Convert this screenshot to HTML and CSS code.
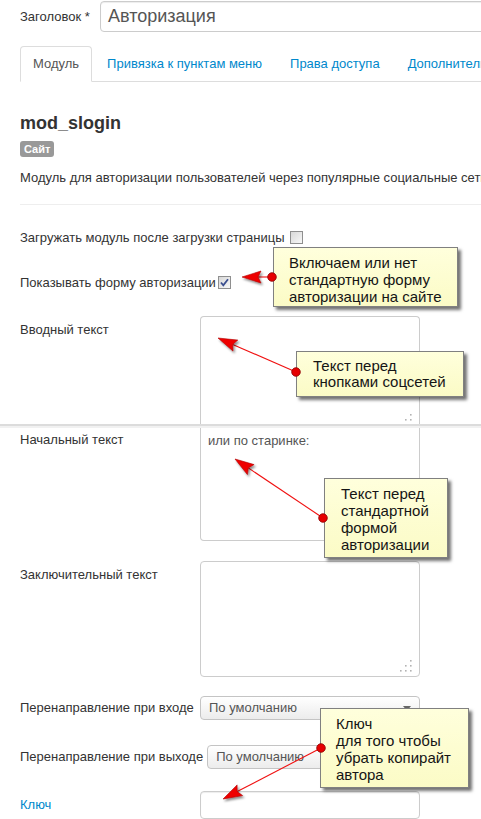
FILE: index.html
```html
<!DOCTYPE html>
<html>
<head>
  <meta charset="utf-8">
  <title>Модуль: Авторизация</title>
  <link rel="stylesheet" href="styles.css">
</head>
<body>
  <div class="page">
    <div class="title-row">
      <label class="title-label">Заголовок *</label>
      <div class="title-input">Авторизация</div>
    </div>

    <div class="tabs">
      <a class="tab active">Модуль</a>
      <a class="tab">Привязка к пунктам меню</a>
      <a class="tab">Права доступа</a>
      <a class="tab">Дополнительные параметры</a>
    </div>

    <div class="module-head">
      <h3 class="module-name">mod_slogin</h3>
      <span class="badge">Сайт</span>
      <p class="module-desc">Модуль для авторизации пользователей через популярные социальные сети.</p>
    </div>
    <div class="divider"></div>

    <div class="check-row first">
      <span>Загружать модуль после загрузки страницы</span>
      <span class="checkbox"></span>
    </div>
    <div class="check-row second">
      <span>Показывать форму авторизации</span>
      <span class="checkbox checked">
        <svg width="11" height="11" viewBox="0 0 11 11"><path d="M2 5.5 L4.3 8.3 L9 2.2" fill="none" stroke="#3b4f8f" stroke-width="1.8"/></svg>
      </span>
    </div>

    <div class="field-row intro-row">
      <label class="field-label">Вводный текст</label>
      <div class="textarea cut-bottom">
        <svg class="grip" width="12" height="12" viewBox="0 0 12 12"><g fill="#b3b3b3"><rect x="10" y="0" width="1.6" height="1.6"/><rect x="5" y="5" width="1.6" height="1.6"/><rect x="10" y="5" width="1.6" height="1.6"/><rect x="0" y="10" width="1.6" height="1.6"/><rect x="5" y="10" width="1.6" height="1.6"/><rect x="10" y="10" width="1.6" height="1.6"/></g></svg>
      </div>
    </div>

    <div class="seam"></div>

    <div class="field-row start-row">
      <label class="field-label">Начальный текст</label>
      <div class="textarea cut-top">или по старинке:</div>
    </div>

    <div class="field-row end-row">
      <label class="field-label">Заключительный текст</label>
      <div class="textarea full">
        <svg class="grip" width="12" height="12" viewBox="0 0 12 12"><g fill="#b3b3b3"><rect x="10" y="0" width="1.6" height="1.6"/><rect x="5" y="5" width="1.6" height="1.6"/><rect x="10" y="5" width="1.6" height="1.6"/><rect x="0" y="10" width="1.6" height="1.6"/><rect x="5" y="10" width="1.6" height="1.6"/><rect x="10" y="10" width="1.6" height="1.6"/></g></svg>
      </div>
    </div>

    <div class="inline-row login-row">
      <label class="inline-label">Перенаправление при входе</label>
      <div class="select">По умолчанию<span class="caret"></span></div>
    </div>
    <div class="inline-row logout-row">
      <label class="inline-label">Перенаправление при выходе</label>
      <div class="select">По умолчанию<span class="caret"></span></div>
    </div>
    <div class="inline-row key-row">
      <label class="inline-label key-label">Ключ</label>
      <div class="text-input"></div>
    </div>

    <!-- callouts -->
    <div class="callout c1">Включаем или нет<br>стандартную форму<br>авторизации на сайте</div>
    <div class="callout c2">Текст перед<br>кнопками соцсетей</div>
    <div class="callout c3">Текст перед<br>стандартной<br>формой<br>авторизации</div>
    <div class="callout c4">Ключ<br>для того чтобы<br>убрать копирайт<br>автора</div>

    <svg class="arrows" width="481" height="819" viewBox="0 0 481 819">
      <defs>
        <filter id="shade" x="-50%" y="-50%" width="200%" height="200%">
          <feDropShadow dx="1.5" dy="2" stdDeviation="1" flood-color="#000" flood-opacity="0.45"/>
        </filter>
      </defs>
      <g stroke="#f01010" stroke-width="1.1">
        <line x1="272" y1="277" x2="258" y2="277"/>
        <line x1="296" y1="372" x2="232.7" y2="344.4"/>
        <line x1="323" y1="518" x2="248.3" y2="467.9"/>
        <line x1="321" y1="748" x2="237.2" y2="791.6"/>
      </g>
      <g fill="#ee0000" stroke="#b00000" stroke-width="0.6" filter="url(#shade)">
        <polygon points="242,277 261,283 258,277 261,271"/>
        <polygon points="218,338 233,351.1 232.7,344.4 237.8,340.1"/>
        <polygon points="235,459 247.4,474.6 248.3,467.9 254.1,464.6"/>
        <polygon points="223,799 242.6,795.6 237.2,791.6 237.1,784.9"/>
      </g>
      <g fill="#e60000" stroke="#8a0000" stroke-width="0.8">
        <circle cx="272" cy="277" r="4.3"/>
        <circle cx="296" cy="372" r="4.3"/>
        <circle cx="323" cy="518" r="4.3"/>
        <circle cx="321" cy="748" r="4.3"/>
      </g>
    </svg>
  </div>
</body>
</html>
```

FILE: styles.css
```css
/* Joomla module edit screen */
html, body {
  margin: 0;
  padding: 0;
  overflow: hidden;
  background-color: #fff;
}

body {
  font-family: "Liberation Sans", Arial, sans-serif;
  font-size: 13px;
  line-height: 18px;
  color: #333;
}

.page {
  position: relative;
  width: 481px;
  height: 819px;
  padding-left: 20px;
  box-sizing: border-box;
  overflow: hidden;
}

/* title */
.title-row {
  display: flex;
  align-items: center;
  height: 31px;
  margin-top: 1px;
}

.title-label {
  width: 80px;
  flex-shrink: 0;
}

.title-input {
  width: 520px;
  height: 31px;
  flex-shrink: 0;
  box-sizing: border-box;
  border: 1px solid #ccc;
  border-radius: 4px;
  box-shadow: inset 0 1px 1px rgba(0, 0, 0, 0.075);
  padding-left: 7px;
  font-size: 18px;
  line-height: 29px;
  color: #555;
}

/* tabs */
.tabs {
  display: flex;
  width: 640px;
  margin-top: 14px;
  border-bottom: 1px solid #ddd;
}

.tab {
  padding: 8px 12px;
  margin-right: 2px;
  margin-bottom: -1px;
  border: 1px solid transparent;
  border-radius: 4px 4px 0 0;
  color: #0088cc;
  white-space: nowrap;
  line-height: 18px;
}

.tab.active {
  border-color: #ddd #ddd transparent;
  background-color: #fff;
  color: #555;
}

/* module info */
.module-head {
  display: flex;
  flex-direction: column;
  align-items: flex-start;
}

.module-name {
  margin: 31px 0 0;
  font-size: 18px;
  line-height: 20px;
  font-weight: bold;
  color: #333;
}

.badge {
  margin-top: 8px;
  padding: 1px 4px;
  border-radius: 3px;
  background-color: #999;
  color: #fff;
  font-size: 11px;
  font-weight: bold;
  line-height: 14px;
}

.module-desc {
  margin: 12px 0 0;
  white-space: nowrap;
}

.divider {
  width: 520px;
  margin-top: 17px;
  border-top: 1px solid #eee;
}

/* checkboxes */
.check-row {
  display: flex;
  align-items: center;
  height: 18px;
  white-space: nowrap;
}

.check-row.first {
  margin-top: 24px;
  gap: 5px;
}

.check-row.second {
  margin-top: 27px;
  gap: 2px;
}

.checkbox {
  display: flex;
  align-items: center;
  justify-content: center;
  width: 13px;
  height: 13px;
  box-sizing: border-box;
  margin-top: -2px;
  border: 1px solid #8f8f8f;
  background: linear-gradient(135deg, #d8d8d8, #f8f8f8);
}

/* textareas */
.field-row {
  display: flex;
  align-items: flex-start;
}

.field-label {
  width: 180px;
  flex-shrink: 0;
  padding-top: 5px;
}

.intro-row {
  margin-top: 24px;
}

.start-row .field-label {
  padding-top: 3px;
}

.end-row {
  margin-top: 20px;
}

.textarea {
  position: relative;
  width: 220px;
  box-sizing: border-box;
  border: 1px solid #ccc;
  border-radius: 4px;
  overflow: hidden;
  color: #555;
}

.textarea.cut-bottom {
  height: 108px;
  border-bottom: none;
  border-radius: 4px 4px 0 0;
}

.textarea.cut-bottom .grip {
  right: 7px;
  bottom: -2px;
}

.textarea.cut-top {
  height: 113px;
  border-top: none;
  border-radius: 0 0 4px 4px;
  padding: 4px 7px;
}

.textarea.full {
  height: 116px;
}

.grip {
  position: absolute;
  right: 7px;
  bottom: 4px;
}

.seam {
  width: 520px;
  height: 4px;
  margin-left: -20px;
  box-sizing: border-box;
  border-top: 2px solid #dcdcdc;
  background-color: #f1f1f1;
}

/* selects and inputs */
.inline-row {
  display: flex;
  align-items: center;
}

.login-row {
  margin-top: 19px;
}

.logout-row {
  margin-top: 25px;
}

.key-row {
  margin-top: 22px;
}

.inline-label {
  min-width: 176px;
  margin-right: 4px;
  flex-shrink: 0;
  white-space: nowrap;
}

.key-label {
  color: #0088cc;
}

.select {
  position: relative;
  width: 220px;
  height: 24px;
  flex-shrink: 0;
  box-sizing: border-box;
  padding-left: 8px;
  border: 1px solid #c4c4c4;
  border-radius: 4px;
  background: linear-gradient(#ffffff, #ececec);
  color: #555;
  line-height: 22px;
}

.caret {
  position: absolute;
  right: 8px;
  top: 9px;
  width: 0;
  height: 0;
  border-left: 4px solid transparent;
  border-right: 4px solid transparent;
  border-top: 5px solid #666;
}

.text-input {
  width: 220px;
  height: 28px;
  flex-shrink: 0;
  box-sizing: border-box;
  border: 1px solid #ccc;
  border-radius: 4px;
  box-shadow: inset 0 1px 1px rgba(0, 0, 0, 0.075);
}

/* annotation callouts */
.callout {
  position: absolute;
  box-sizing: border-box;
  padding: 6px 0 0 15px;
  border: 1px solid #808080;
  background: linear-gradient(#ffffdc, #fbfbc6);
  box-shadow: 3px 3px 3px rgba(0, 0, 0, 0.55);
  font-size: 15px;
  line-height: 17px;
  color: #151515;
  white-space: nowrap;
}

.c1 {
  left: 273px;
  top: 247px;
  width: 185px;
  height: 60px;
}

.c2 {
  left: 296px;
  top: 351px;
  width: 168px;
  height: 46px;
  padding-top: 6px;
  padding-left: 16px;
  line-height: 16px;
}

.c3 {
  left: 324px;
  top: 478px;
  width: 124px;
  height: 80px;
  padding-left: 16px;
}

.c4 {
  left: 320px;
  top: 708px;
  width: 149px;
  height: 80px;
  padding-left: 15px;
}

.arrows {
  position: absolute;
  left: 0;
  top: 0;
  pointer-events: none;
}
```
